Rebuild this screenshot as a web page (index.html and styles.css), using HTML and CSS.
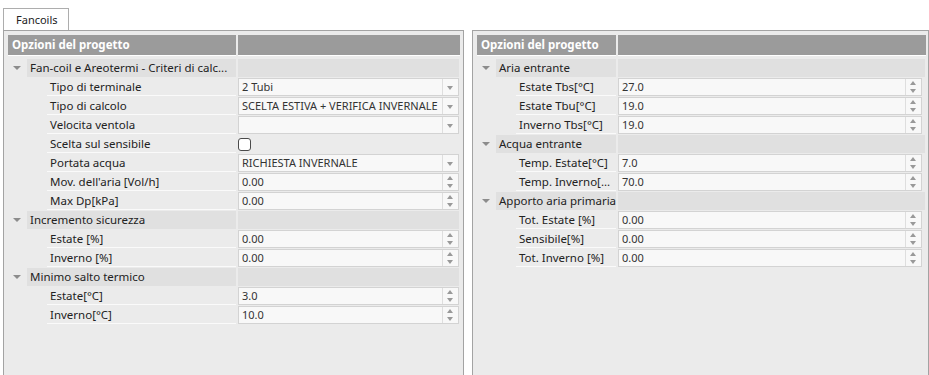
FILE: index.html
```html
<!DOCTYPE html>
<html lang="it">
<head>
	<meta charset="UTF-8">
	<title>Fancoils</title>
	<link rel="stylesheet" href="styles.css">
</head>
<body>
	<div class="tabs">
		<div class="tab">Fancoils</div>
	</div>
	<div class="panes">
		<div class="pane pane-left">
			<div class="props">
				<div class="hd">Opzioni del progetto</div><div class="hd"></div>

				<div class="grp"><i class="caret"></i><span>Fan-coil e Areotermi - Criteri di calc...</span></div><div class="gval"></div>
				<div class="lbl">Tipo di terminale</div><div class="val"><span>2 Tubi</span><i class="drop"></i></div>
				<div class="lbl">Tipo di calcolo</div><div class="val"><span>SCELTA ESTIVA + VERIFICA INVERNALE</span><i class="drop"></i></div>
				<div class="lbl">Velocita ventola</div><div class="val"><span></span><i class="drop"></i></div>
				<div class="lbl">Scelta sul sensibile</div><div class="chk"><i class="box"></i></div>
				<div class="lbl">Portata acqua</div><div class="val"><span>RICHIESTA INVERNALE</span><i class="drop"></i></div>
				<div class="lbl">Mov. dell'aria [Vol/h]</div><div class="val"><span>0.00</span><i class="spin"></i></div>
				<div class="lbl">Max Dp[kPa]</div><div class="val"><span>0.00</span><i class="spin"></i></div>

				<div class="grp"><i class="caret"></i><span>Incremento sicurezza</span></div><div class="gval"></div>
				<div class="lbl">Estate [%]</div><div class="val"><span>0.00</span><i class="spin"></i></div>
				<div class="lbl">Inverno [%]</div><div class="val"><span>0.00</span><i class="spin"></i></div>

				<div class="grp"><i class="caret"></i><span>Minimo salto termico</span></div><div class="gval"></div>
				<div class="lbl">Estate[°C]</div><div class="val"><span>3.0</span><i class="spin"></i></div>
				<div class="lbl">Inverno[°C]</div><div class="val"><span>10.0</span><i class="spin"></i></div>
			</div>
		</div>
		<div class="pane pane-right">
			<div class="props">
				<div class="hd">Opzioni del progetto</div><div class="hd"></div>

				<div class="grp"><i class="caret"></i><span>Aria entrante</span></div><div class="gval"></div>
				<div class="lbl">Estate Tbs[°C]</div><div class="val"><span>27.0</span><i class="spin"></i></div>
				<div class="lbl">Estate Tbu[°C]</div><div class="val"><span>19.0</span><i class="spin"></i></div>
				<div class="lbl">Inverno Tbs[°C]</div><div class="val"><span>19.0</span><i class="spin"></i></div>

				<div class="grp"><i class="caret"></i><span>Acqua entrante</span></div><div class="gval"></div>
				<div class="lbl">Temp. Estate[°C]</div><div class="val"><span>7.0</span><i class="spin"></i></div>
				<div class="lbl">Temp. Inverno[...</div><div class="val"><span>70.0</span><i class="spin"></i></div>

				<div class="grp"><i class="caret"></i><span>Apporto aria primaria</span></div><div class="gval"></div>
				<div class="lbl">Tot. Estate [%]</div><div class="val"><span>0.00</span><i class="spin"></i></div>
				<div class="lbl">Sensibile[%]</div><div class="val"><span>0.00</span><i class="spin"></i></div>
				<div class="lbl">Tot. Inverno [%]</div><div class="val"><span>0.00</span><i class="spin"></i></div>
			</div>
		</div>
	</div>
</body>
</html>
```

FILE: styles.css
```css
body {
	margin: 0;
	padding: 8px 0 0 3px;
	background: #fff;
	font-family: "Noto Sans", "DejaVu Sans", sans-serif;
	font-size: 11.5px;
	color: #222;
	overflow: hidden;
}

.tabs {
	display: flex;
	height: 22px;
}

.tab {
	width: 52px;
	padding-left: 12px;
	border: 1px solid #adadad;
	border-bottom: none;
	background: #fff;
	line-height: 21px;
	font-size: 11px;
}

.panes {
	display: flex;
	gap: 8px;
	height: 360px;
}

.pane {
	border: 1px solid #a3a3a3;
	background: #ebebeb;
	padding: 4px;
}

.pane-left {
	width: 451px;
}

.pane-right {
	flex: 1;
	padding-right: 3px;
}

.props {
	display: grid;
	grid-template-columns: 228px 1fr;
	grid-template-rows: 23px;
	grid-auto-rows: 18px;
	column-gap: 2px;
	row-gap: 1px;
}

.pane-right .props {
	grid-template-columns: 139px 1fr;
}

.hd {
	height: 20px;
	background: #9b9b9b;
	color: #fff;
	font-weight: bold;
	line-height: 20px;
	padding-left: 4px;
	box-shadow: 0 1px 0 #fff;
}

.props .hd:nth-child(2) {
	margin-right: -1px;
}

.grp {
	display: flex;
	align-items: center;
	height: 18px;
}

.caret {
	width: 0;
	height: 0;
	margin: 0 6px 0 5px;
	border-left: 4px solid transparent;
	border-right: 4px solid transparent;
	border-top: 4px solid #8c8c8c;
}

.grp span {
	flex: 1;
	height: 18px;
	line-height: 18px;
	padding-left: 3px;
	background: #e0e0e0;
	white-space: nowrap;
	overflow: hidden;
}

.gval {
	background: #e0e0e0;
}

.lbl {
	margin-left: 39px;
	padding-left: 3px;
	line-height: 17px;
	border-bottom: 1px solid #fafafa;
	white-space: nowrap;
	overflow: hidden;
}

.val {
	display: flex;
	border: 1px solid #d3d3d3;
	background: #f8f8f8;
	font-size: 11px;
	color: #333;
}

.pane-right .val {
	margin-right: 3px;
}

.val span {
	flex: 1;
	padding-left: 3px;
	line-height: 16px;
	white-space: nowrap;
	overflow: hidden;
}

.drop, .spin {
	position: relative;
	width: 15px;
	border-left: 1px solid #dedede;
}

.drop::after {
	content: "";
	position: absolute;
	left: 4px;
	top: 7px;
	border-left: 3.5px solid transparent;
	border-right: 3.5px solid transparent;
	border-top: 4px solid #999;
}

.spin::before, .spin::after {
	content: "";
	position: absolute;
	left: 4px;
	border-left: 3.5px solid transparent;
	border-right: 3.5px solid transparent;
}

.spin::before {
	top: 2px;
	border-bottom: 4px solid #999;
}

.spin::after {
	bottom: 2px;
	border-top: 4px solid #999;
}

.chk {
	display: flex;
	align-items: center;
}

.box {
	width: 11px;
	height: 11px;
	border: 1px solid #4a4a4a;
	border-radius: 3px;
	background: #fff;
}
```
